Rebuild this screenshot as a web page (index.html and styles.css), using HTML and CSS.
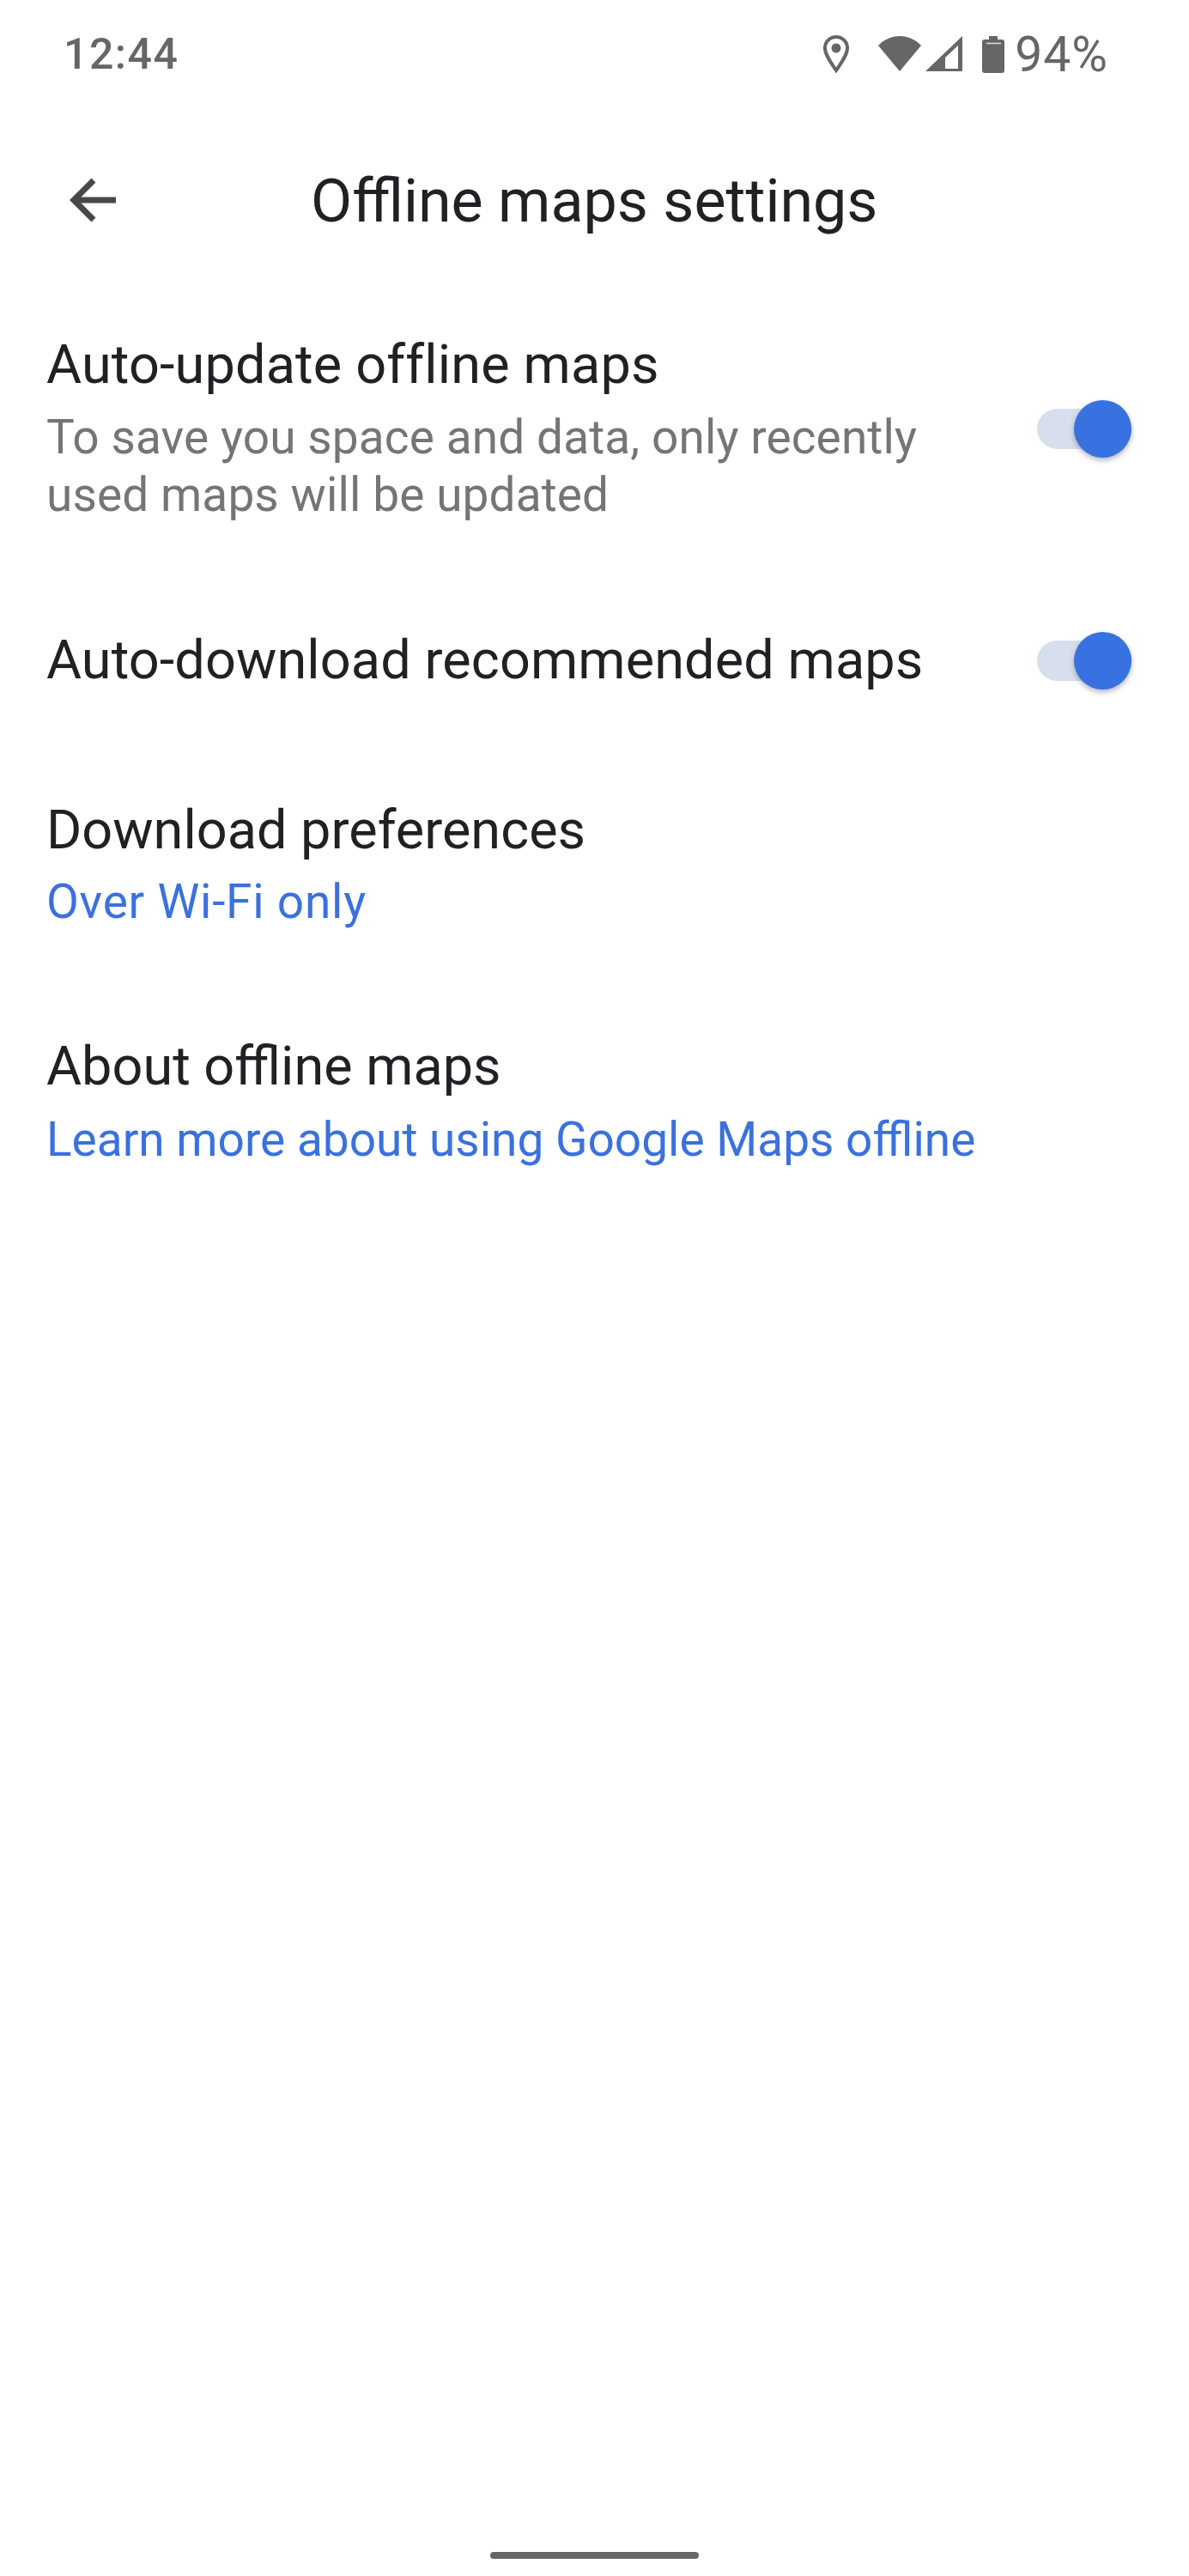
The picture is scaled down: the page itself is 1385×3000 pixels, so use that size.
FILE: index.html
```html
<!DOCTYPE html>
<html lang="en">
<head>
  <meta charset="UTF-8" />
  <title>Offline maps settings</title>
  <link rel="stylesheet" href="styles.css">
</head>
<body>

  <div class="status-bar">
    <span class="time">12:44</span>
    <div class="status-icons">
      <svg class="icon-pin" width="30" height="44" viewBox="0 0 30 44">
        <path d="M15 2C8 2 2 7.500 2 15c0 8 7 17 13 26 6-9 13-18 13-26C28 7.500 22 2 15 2z" fill="none" stroke="#666" stroke-width="4"/>
        <circle cx="15" cy="15" r="5.500" fill="#666"/>
      </svg>
      <svg class="icon-wifi" width="50" height="42" viewBox="0 0 50 42">
        <path d="M0 11C7 4 15 0 25 0s18 4 25 11L25 41z" fill="#666"/>
      </svg>
      <svg class="icon-signal" width="44" height="42" viewBox="0 0 44 42">
        <path d="M43 0v41H0zM23 25v13h15V11z" fill="#666" fill-rule="evenodd"/>
      </svg>
      <svg class="icon-battery" width="26" height="43" viewBox="0 0 26 43">
        <path d="M8 0h10v4h5a3 3 0 0 1 3 3v33a3 3 0 0 1-3 3H3a3 3 0 0 1-3-3V7a3 3 0 0 1 3-3h5z" fill="#666"/>
        <path d="M5 8.500h17" stroke="#dfe3ea" stroke-width="1.500"/>
      </svg>
      <span class="battery">94%</span>
    </div>
  </div>

  <header class="app-bar">
    <svg class="back" width="56" height="54" viewBox="0 0 56 54">
      <path d="M54 27H5M28 4L5 27l23 23" fill="none" stroke="#484848" stroke-width="7"/>
    </svg>
    <h1>Offline maps settings</h1>
  </header>

  <main class="settings">
    <div class="row row-update">
      <div class="row-text">
        <h2>Auto-update offline maps</h2>
        <p>To save you space and data, only recently<br>used maps will be updated</p>
      </div>
      <div class="switch"><span class="knob"></span></div>
    </div>

    <div class="row row-download">
      <div class="row-text">
        <h2>Auto-download recommended maps</h2>
      </div>
      <div class="switch"><span class="knob"></span></div>
    </div>

    <div class="row row-prefs">
      <div class="row-text">
        <h2>Download preferences</h2>
        <p class="link">Over Wi-Fi only</p>
      </div>
    </div>

    <div class="row row-about">
      <div class="row-text">
        <h2>About offline maps</h2>
        <p class="link">Learn more about using Google Maps offline</p>
      </div>
    </div>
  </main>

  <div class="nav-pill"></div>

</body>
</html>
```

FILE: styles.css
```css
* {
  box-sizing: border-box;
}

body {
  margin: 0;
  height: 3000px;
  display: flex;
  flex-direction: column;
  background-color: #fff;
  font-family: Roboto, "Open Sans", sans-serif;
  color: #202124;
}

.status-bar {
  height: 126px;
  padding: 0 94px 0 74px;
  display: flex;
  justify-content: space-between;
  align-items: center;
  color: #666;
}

.time {
  font-size: 50px;
  font-weight: 500;
  letter-spacing: 1.5px;
}

.status-icons {
  display: flex;
  align-items: center;
}

.icon-wifi {
  margin-left: 34px;
}

.icon-signal {
  margin-left: 5px;
}

.icon-battery {
  margin-left: 22px;
}

.battery {
  margin-left: 12px;
  font-size: 57px;
  letter-spacing: 1px;
}

.app-bar {
  height: 214px;
  padding: 80px 0 0 81px;
  display: flex;
  align-items: flex-start;
}

.app-bar h1 {
  margin: 0 0 0 225px;
  font-size: 70px;
  font-weight: 400;
  line-height: 56px;
}

.settings {
  display: flex;
  flex-direction: column;
}

.row {
  padding-left: 54px;
  padding-right: 67px;
  display: flex;
  justify-content: space-between;
  align-items: center;
}

.row h2 {
  margin: 0;
  font-size: 63px;
  font-weight: 400;
  line-height: 86px;
}

.row p {
  margin: 0;
  font-size: 55px;
  line-height: 67px;
  color: #757575;
}

.row p.link {
  color: #3a71de;
  line-height: 84px;
}

.row-update {
  padding-top: 42px;
  padding-bottom: 42px;
}

.row-update h2 {
  letter-spacing: 0.15px;
}

.row-update p {
  margin-top: 8px;
  margin-bottom: 6px;
  letter-spacing: 0.1px;
}

.row-download {
  padding-top: 68px;
  padding-bottom: 64px;
}

.row-download h2 {
  letter-spacing: 0.1px;
}

.row-prefs {
  padding-top: 48px;
  padding-bottom: 63px;
}

.row-prefs p.link {
  line-height: 80px;
  letter-spacing: 0.77px;
}

.row-about {
  padding-top: 46px;
}

.switch {
  width: 110px;
  height: 47px;
  border-radius: 24px;
  background-color: #d8dfec;
  position: relative;
  flex-shrink: 0;
}

.knob {
  position: absolute;
  right: 0;
  top: -10px;
  width: 67px;
  height: 67px;
  border-radius: 50%;
  background-color: #3871e0;
  box-shadow: 0 3px 6px rgba(60, 70, 100, 0.4);
}

.nav-pill {
  margin: auto auto 20px;
  width: 243px;
  height: 8px;
  border-radius: 4px;
  background-color: #666;
}
```
